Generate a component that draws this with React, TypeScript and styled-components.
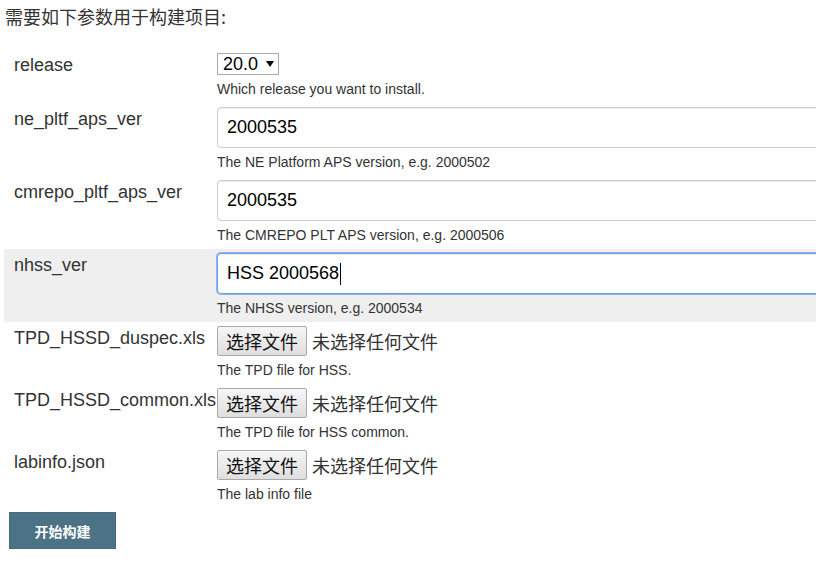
import React from "react";
import styled, { createGlobalStyle } from "styled-components";

const Global = createGlobalStyle`
  html, body {
    margin: 0;
    padding: 0;
    background: #fff;
    overflow: hidden;
  }
  body {
    font-family: "Liberation Sans", Arial, "Noto Sans CJK SC", sans-serif;
    color: #333;
  }
`;

const Page = styled.div`
  width: 1000px;
  padding: 4px 0 0 4px;
  box-sizing: border-box;
`;

const Heading = styled.div`
  font-size: 18px;
  line-height: 25px;
  padding-left: 1px;
  margin-bottom: 20px;
  font-family: "Noto Sans CJK SC", sans-serif;
  color: #333;
`;

const Row = styled.div<{ $active?: boolean }>`
  display: grid;
  grid-template-columns: 213px 1fr;
  padding: 4px 0;
  background: ${(p) => (p.$active ? "#efefef" : "transparent")};
`;

const Label = styled.div`
  font-size: 18px;
  line-height: 23px;
  padding: 1px 0 0 10px;
  color: #333;
  white-space: nowrap;
`;

const Field = styled.div`
  display: flex;
  flex-direction: column;
  align-items: flex-start;
`;

const Help = styled.div`
  font-size: 14px;
  line-height: 20px;
  margin-top: 4px;
  color: #333;
  white-space: nowrap;
`;

const SelectBox = styled.div`
  display: flex;
  align-items: center;
  box-sizing: border-box;
  width: 62px;
  height: 22px;
  border: 1px solid #a9a9a9;
  background: #fff;
  padding: 0 0 0 5px;
  font-size: 18px;
  color: #000;
  gap: 8px;
`;

const Input = styled.div<{ $focused?: boolean }>`
  box-sizing: border-box;
  width: 640px;
  height: 41px;
  display: flex;
  align-items: center;
  padding: 0 9px;
  font-size: 18px;
  color: #000;
  background: #fff;
  border: 1px solid ${(p) => (p.$focused ? "#6ea2e8" : "#ccc")};
  border-radius: 4px;
  box-shadow: ${(p) =>
    p.$focused
      ? "0 0 0 1px #8db4ec, inset 0 1px 1px rgba(0,0,0,.075)"
      : "inset 0 1px 1px rgba(0,0,0,.075)"};
`;

const Caret = styled.span`
  display: inline-block;
  width: 1px;
  height: 22px;
  background: #000;
  margin-left: 1px;
`;

const FileLine = styled.div`
  display: flex;
  align-items: center;
  gap: 5px;
  font-family: "Noto Sans CJK SC", sans-serif;
  font-size: 18px;
  color: #333;
`;

const FileButton = styled.div`
  box-sizing: border-box;
  width: 90px;
  height: 30px;
  display: flex;
  align-items: center;
  justify-content: center;
  border: 1px solid #a9a9a9;
  border-radius: 2px;
  background: linear-gradient(#f6f6f6, #dedede);
  color: #111;
  font-size: 18px;
`;

const Submit = styled.div`
  margin: 4px 0 0 5px;
  width: 107px;
  height: 37px;
  display: flex;
  align-items: center;
  justify-content: center;
  background: #4c7286;
  color: #fff;
  font-family: "Noto Sans CJK SC", sans-serif;
  font-weight: 700;
  font-size: 14px;
  border: 1px solid #46697b;
  box-sizing: border-box;
`;

const Arrow = () => (
  <svg width="8" height="6" viewBox="0 0 8 6">
    <path d="M0 0 L8 0 L4 6 Z" fill="#000" />
  </svg>
);

type TextRow = { label: string; value: string; help: string; focused?: boolean };
const textRows: TextRow[] = [
  { label: "ne_pltf_aps_ver", value: "2000535", help: "The NE Platform APS version, e.g. 2000502" },
  { label: "cmrepo_pltf_aps_ver", value: "2000535", help: "The CMREPO PLT APS version, e.g. 2000506" },
  { label: "nhss_ver", value: "HSS 2000568", help: "The NHSS version, e.g. 2000534", focused: true },
];

const fileRows = [
  { label: "TPD_HSSD_duspec.xls", help: "The TPD file for HSS." },
  { label: "TPD_HSSD_common.xls", help: "The TPD file for HSS common." },
  { label: "labinfo.json", help: "The lab info file" },
];

export default function App() {
  return (
    <Page>
      <Global />
      <Heading>需要如下参数用于构建项目:</Heading>
      <Row>
        <Label>release</Label>
        <Field>
          <SelectBox>
            <span>20.0</span>
            <Arrow />
          </SelectBox>
          <Help>Which release you want to install.</Help>
        </Field>
      </Row>
      {textRows.map((r) => (
        <Row key={r.label} $active={r.focused}>
          <Label>{r.label}</Label>
          <Field>
            <Input $focused={r.focused}>
              <span>{r.value}</span>
              {r.focused && <Caret />}
            </Input>
            <Help>{r.help}</Help>
          </Field>
        </Row>
      ))}
      {fileRows.map((r) => (
        <Row key={r.label}>
          <Label>{r.label}</Label>
          <Field>
            <FileLine>
              <FileButton>选择文件</FileButton>
              <span>未选择任何文件</span>
            </FileLine>
            <Help>{r.help}</Help>
          </Field>
        </Row>
      ))}
      <Submit>开始构建</Submit>
    </Page>
  );
}
